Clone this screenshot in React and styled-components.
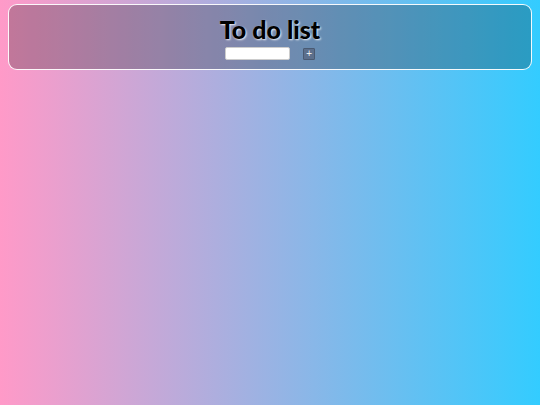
import React, { useState } from 'react';
import styled, { createGlobalStyle } from 'styled-components';

const GlobalStyle = createGlobalStyle`
  html, body {
    margin: 0;
    padding: 0;
  }
  body {
    font-family: 'Lato', 'Liberation Sans', sans-serif;
  }
`;

const Page = styled.div`
  box-sizing: border-box;
  width: 100%;
  min-height: 405px;
  padding: 4px 8px;
  background: linear-gradient(to right, #ff9ac8, #33ccff);
`;

const Header = styled.div`
  display: flex;
  flex-direction: column;
  align-items: center;
  box-sizing: border-box;
  height: 66px;
  padding-top: 10px;
  border: 1px solid rgba(255, 255, 255, 0.95);
  border-radius: 9px;
  background-color: rgba(0, 0, 0, 0.23);
`;

const Title = styled.h1`
  margin: 0;
  font-family: 'Lato', sans-serif;
  font-size: 25px;
  font-weight: 900;
  line-height: 28px;
  color: #000;
  text-shadow: 1px 1px 2px rgba(255, 255, 255, 0.9);
`;

const Form = styled.form`
  display: flex;
  align-items: center;
  gap: 13px;
  margin-top: 4px;
`;

const TaskInput = styled.input`
  box-sizing: border-box;
  width: 65px;
  height: 13px;
  padding: 0 3px;
  border: 1px solid #ccc;
  border-radius: 2px;
  background: #fff;
  font-size: 9px;
  outline: none;
`;

const AddBtn = styled.button`
  box-sizing: border-box;
  display: flex;
  align-items: center;
  justify-content: center;
  width: 12px;
  height: 12px;
  padding: 0;
  border: 1px solid #4a5a72;
  border-radius: 1px;
  background-color: #5c6f8c;
  color: #fff;
  font-family: 'DejaVu Sans', sans-serif;
  font-size: 8px;
  line-height: 1;
  cursor: pointer;
`;

const App = () => {
  const [task, setTask] = useState('');
  return (
    <Page>
      <GlobalStyle />
      <Header>
        <Title>To do list</Title>
        <Form onSubmit={(e) => e.preventDefault()}>
          <TaskInput
            type="text"
            value={task}
            onChange={(e) => setTask(e.target.value)}
          />
          <AddBtn type="submit">+</AddBtn>
        </Form>
      </Header>
    </Page>
  );
};

export default App;
